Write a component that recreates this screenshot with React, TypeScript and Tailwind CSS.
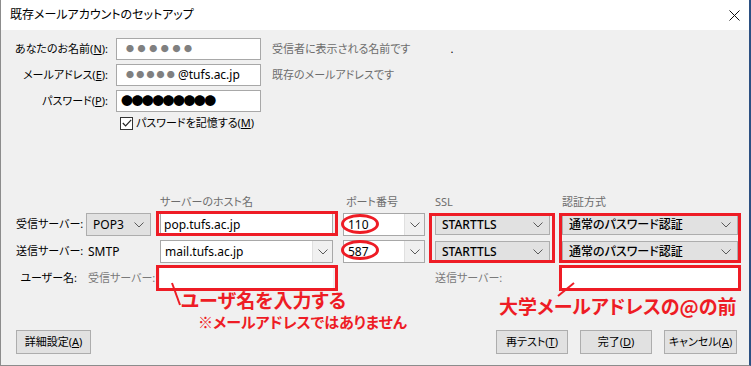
import React from 'react';

const UI = "font-['Noto_Sans','Noto_Sans_CJK_JP',sans-serif] [font-feature-settings:'palt']";
const RED = 'border-[#ee1c25]';

const Chevron = () => (
  <svg width="10" height="6" viewBox="0 0 10 6" className="shrink-0">
    <polyline points="0.5,0.5 5,5 9.5,0.5" fill="none" stroke="#5a5a5a" strokeWidth="1" />
  </svg>
);

const Select: React.FC<{ value: string; className?: string }> = ({ value, className = '' }) => (
  <div className={`h-full flex items-center justify-between bg-[#e1e1e1] border border-[#adadad] pl-[6px] pr-[6px] text-[12px] text-black ${className}`}>
    <span className="truncate">{value}</span>
    <Chevron />
  </div>
);

const Combo: React.FC<{ value: string; className?: string }> = ({ value, className = '' }) => (
  <div className={`h-full flex border border-[#a8a8a8] bg-white ${className}`}>
    <div className="flex-1 flex items-center pl-[4px] text-[12px] text-black">{value}</div>
    <div className="w-[20px] flex items-center justify-center bg-[#f0f0f0] border-l border-[#e0e0e0]">
      <Chevron />
    </div>
  </div>
);

const Button: React.FC<{ label: string; k: string; className?: string }> = ({ label, k, className = '' }) => (
  <button className={`h-[24px] bg-[#e1e1e1] border border-[#adadad] text-[11px] text-black flex items-center justify-center ${className}`}>
    <span>{label}(<span className="underline">{k}</span>)</span>
  </button>
);

export default function App() {
  return (
    <div className={`relative w-[751px] h-[366px] overflow-hidden bg-[#f0f0f0] border-l border-b border-[#8c8c8c] border-r-2 border-r-[#2b5082] flex flex-col ${UI}`}>
      {/* Title bar */}
      <div className="h-[30px] shrink-0 bg-white flex items-center justify-between pl-[9px] pr-[9px]">
        <span className="text-[12px] text-black">既存メールアカウントのセットアップ</span>
        <svg width="11" height="11" viewBox="0 0 11 11">
          <path d="M0.5 0.5 L10.5 10.5 M10.5 0.5 L0.5 10.5" stroke="#111" strokeWidth="1" />
        </svg>
      </div>

      <div className="flex-1 flex flex-col pb-[11px]">
        {/* Identity */}
        <div className="pt-[8px] grid grid-cols-[107px_145px_1fr] gap-x-[8px] gap-y-[4px] text-[11px]">
          <div className="h-[22px] flex items-center justify-end text-black">
            <span>あなたのお名前(<span className="underline">N</span>):</span>
          </div>
          <div className="h-[22px] bg-white border border-[#a8a8a8] flex items-center pl-[9px] text-[8px] text-[#808080] tracking-[3.6px]">
            ●●●●●●
          </div>
          <div className="h-[22px] flex items-center pl-[3px] text-[#6d6d6d]">
            <span>受信者に表示される名前です</span>
            <span className="ml-[40px] text-black">.</span>
          </div>

          <div className="h-[22px] flex items-center justify-end text-black">
            <span>メールアドレス(<span className="underline">E</span>):</span>
          </div>
          <div className="h-[22px] bg-white border border-[#a8a8a8] flex items-center pl-[9px]">
            <span className="text-[8px] text-[#808080] tracking-[2.2px]">●●●●●</span>
            <span className="ml-[1px] text-[12px] text-black">@tufs.ac.jp</span>
          </div>
          <div className="h-[22px] flex items-center pl-[3px] text-[#6d6d6d]">既存のメールアドレスです</div>

          <div className="h-[22px] flex items-center justify-end text-black">
            <span>パスワード(<span className="underline">P</span>):</span>
          </div>
          <div className="h-[22px] bg-white border border-[#a8a8a8] flex items-center pl-[4px] text-[12px] text-black tracking-[-1.6px] font-['Noto_Sans_CJK_JP',sans-serif] [font-feature-settings:normal]">
            ●●●●●●●●●
          </div>
          <div />
        </div>

        <label className="mt-[4px] h-[14px] pl-[119px] flex items-center gap-[3px] text-[11px] text-black">
          <span className="w-[13px] h-[13px] bg-white border border-[#333] flex items-center justify-center">
            <svg width="10" height="8" viewBox="0 0 10 8">
              <polyline points="0.8,4 3.6,6.8 9.2,0.8" fill="none" stroke="#222" strokeWidth="1.2" />
            </svg>
          </span>
          <span>パスワードを記憶する(<span className="underline">M</span>)</span>
        </label>

        {/* Servers */}
        <div className="mt-[65px] pl-[15px] grid grid-cols-[70px_74px_183px_92px_127px_176px] grid-rows-[14px_23px_23px_23px] gap-y-[4px] text-[11px]">
          <div />
          <div />
          <div className="flex items-center text-[#6d6d6d]">サーバーのホスト名</div>
          <div className="flex items-center pl-[3px] text-[#6d6d6d]">ポート番号</div>
          <div className="flex items-center text-[#6d6d6d]">SSL</div>
          <div className="flex items-center text-[#6d6d6d]">認証方式</div>

          <div className="flex items-center text-black">受信サーバー:</div>
          <div className="w-[65px]"><Select value="POP3" /></div>
          <div className="w-[173px] bg-white border border-[#a8a8a8] flex items-center pl-[3px] text-[12px] text-black">pop.tufs.ac.jp</div>
          <div className="w-[82px]"><Combo value="110" /></div>
          <div className="w-[115px] py-[1px]"><Select value="STARTTLS" className="font-medium" /></div>
          <div className="w-[176px] py-[1px]"><Select value="通常のパスワード認証" className="font-medium pl-[3px]" /></div>

          <div className="flex items-center text-black">送信サーバー:</div>
          <div className="flex items-center pl-[2px] text-[12px] text-black">SMTP</div>
          <div className="w-[173px]"><Combo value="mail.tufs.ac.jp" /></div>
          <div className="w-[82px]"><Combo value="587" /></div>
          <div className="w-[115px] py-[1px]"><Select value="STARTTLS" className="font-medium" /></div>
          <div className="w-[176px] py-[1px]"><Select value="通常のパスワード認証" className="font-medium pl-[3px]" /></div>

          <div className="flex items-center justify-end pr-[9px] text-black">ユーザー名:</div>
          <div className="flex items-center pl-[2px] text-[#7a7a7a]">受信サーバー:</div>
          <div className="w-[173px] bg-white" />
          <div />
          <div className="flex items-center text-[#7a7a7a]">送信サーバー:</div>
          <div className="w-[176px] bg-white" />
        </div>

        <div className="flex-1" />

        {/* Footer buttons */}
        <div className="flex items-center justify-between pl-[15px] pr-[12px]">
          <Button label="詳細設定" k="A" className="w-[75px]" />
          <div className="flex gap-[12px]">
            <Button label="再テスト" k="T" className="w-[72px]" />
            <Button label="完了" k="D" className="w-[72px]" />
            <Button label="キャンセル" k="A" className="w-[73px]" />
          </div>
        </div>
      </div>

      {/* Red annotations drawn over the dialog */}
      <div className={`absolute left-[155px] top-[211px] w-[182px] h-[25px] border-[3px] ${RED}`} />
      <div className={`absolute left-[155px] top-[265px] w-[182px] h-[26px] border-[3px] ${RED}`} />
      <div className={`absolute left-[428px] top-[213px] w-[126px] h-[50px] border-[3px] ${RED}`} />
      <div className={`absolute left-[558px] top-[213px] w-[182px] h-[50px] border-[3px] ${RED}`} />
      <div className={`absolute left-[558px] top-[265px] w-[182px] h-[26px] border-[3px] ${RED}`} />
      <div className={`absolute left-[340px] top-[214px] w-[38px] h-[20px] rounded-[50%] border-[3px] ${RED}`} />
      <div className={`absolute left-[340px] top-[240px] w-[38px] h-[20px] rounded-[50%] border-[3px] ${RED}`} />
      <svg className="absolute left-0 top-0 pointer-events-none" width="751" height="366">
        <line x1="171" y1="283" x2="179" y2="305" stroke="#ee1c25" strokeWidth="2" />
        <line x1="573" y1="283" x2="557" y2="296" stroke="#ee1c25" strokeWidth="2" />
      </svg>
      <div className="absolute left-[180px] top-[290px] text-[19px] leading-[20px] font-bold text-[#ee1c25] font-['Noto_Sans_CJK_JP',sans-serif]">
        ユーザ名を入力する
      </div>
      <div className="absolute left-[197px] top-[314px] text-[15px] leading-[16px] font-bold text-[#ee1c25] font-['Noto_Sans_CJK_JP',sans-serif]">
        ※メールアドレスではありません
      </div>
      <div className="absolute left-[498px] top-[296px] text-[19px] leading-[20px] font-bold text-[#ee1c25] font-['Noto_Sans_CJK_JP',sans-serif]">
        大学メールアドレスの@の前
      </div>
    </div>
  );
}
